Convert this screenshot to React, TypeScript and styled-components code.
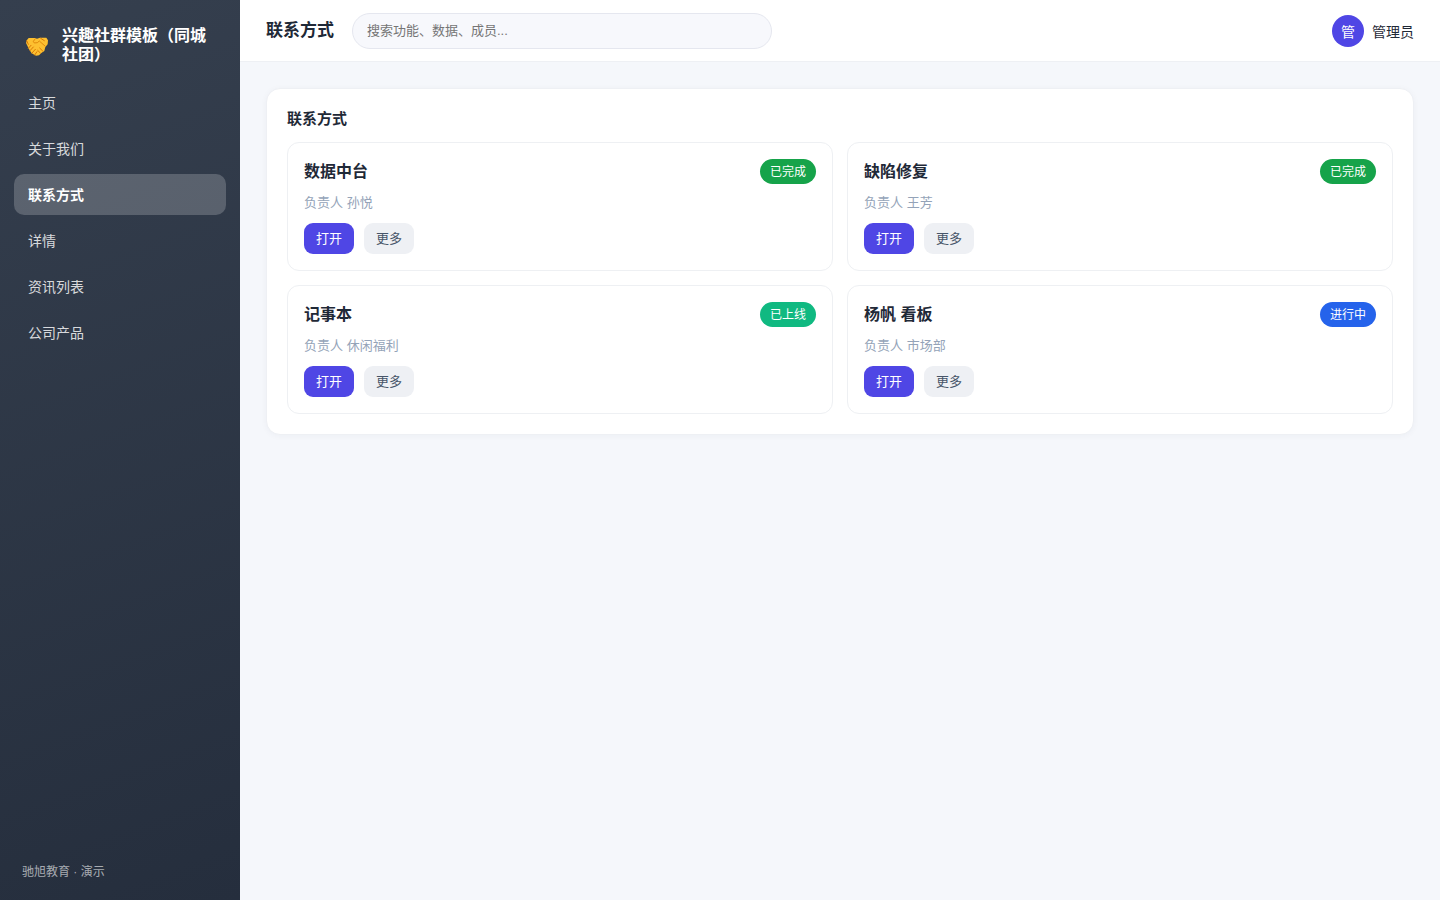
import React from "react";
import styled, { createGlobalStyle } from "styled-components";

const GlobalStyle = createGlobalStyle`
  *, *::before, *::after { box-sizing: border-box; }
  body {
    margin: 0;
    background: #f5f7fb;
    color: #1f2937;
    font-family: "Liberation Sans", "Noto Sans CJK SC", sans-serif;
    font-size: 14px;
  }
  button, input { font-family: inherit; }
`;

const Shell = styled.div`
  display: flex;
  min-height: 100vh;
`;

const Sidebar = styled.aside`
  display: flex;
  flex-direction: column;
  flex: 0 0 240px;
  padding: 20px 14px;
  background: linear-gradient(160deg, #353f4e, #252e3d);
  color: #fff;
`;

const Brand = styled.div`
  display: flex;
  align-items: center;
  gap: 14px;
  padding: 6px 12px 18px;
`;

const BrandIcon = styled.svg`
  flex: none;
  width: 22px;
  height: 24px;
`;

const BrandName = styled.div`
  font-size: 16px;
  font-weight: 700;
  line-height: 19px;
`;

const Nav = styled.nav`
  display: flex;
  flex-direction: column;
  gap: 5px;
`;

const NavLink = styled.a<{ $active: boolean }>`
  padding: 11px 14px 9px;
  border-radius: 10px;
  font-size: 14px;
  line-height: 21px;
  text-decoration: none;
  color: ${(p) => (p.$active ? "#fff" : "rgba(255, 255, 255, 0.82)")};
  font-weight: ${(p) => (p.$active ? 700 : 400)};
  background: ${(p) => (p.$active ? "rgba(255, 255, 255, 0.2)" : "transparent")};
`;

const SidebarFooter = styled.div`
  margin-top: auto;
  padding: 0 8px;
  font-size: 12px;
  line-height: 16px;
  color: rgba(255, 255, 255, 0.6);
`;

const Main = styled.div`
  display: flex;
  flex: 1;
  flex-direction: column;
  min-width: 0;
`;

const Topbar = styled.header`
  display: flex;
  align-items: center;
  gap: 18px;
  padding: 12px 26px;
  height: 62px;
  background: #fff;
  border-bottom: 1px solid #eef0f4;
`;

const PageTitle = styled.h1`
  margin: 0;
  font-size: 17px;
  line-height: 25px;
`;

const Search = styled.input`
  flex: 0 1 420px;
  min-width: 0;
  height: 36px;
  padding: 0 14px;
  border: 1px solid #e5e7ef;
  border-radius: 18px;
  background: #f7f8fc;
  font-size: 13px;
  color: #1f2937;
  &::placeholder { color: #757575; }
`;

const User = styled.div`
  display: flex;
  align-items: center;
  gap: 8px;
  margin-left: auto;
`;

const Avatar = styled.span`
  display: flex;
  align-items: center;
  justify-content: center;
  width: 32px;
  height: 32px;
  border-radius: 50%;
  background: #4f46e5;
  color: #fff;
`;

const Content = styled.main`
  padding: 26px;
`;

const Panel = styled.section`
  padding: 20px;
  border: 1px solid #eef0f4;
  border-radius: 14px;
  background: #fff;
  box-shadow: 0 1px 6px rgba(30, 41, 80, 0.04);
`;

const PanelTitle = styled.h2`
  margin: 0 0 14px;
  font-size: 15px;
  line-height: 19px;
`;

const Grid = styled.div`
  display: grid;
  grid-template-columns: repeat(2, minmax(0, 1fr));
  gap: 14px;
`;

const Card = styled.article`
  padding: 16px;
  border: 1px solid #eef0f3;
  border-radius: 12px;
`;

const CardHead = styled.div`
  display: flex;
  align-items: center;
  justify-content: space-between;
`;

const CardTitle = styled.h3`
  margin: 0;
  font-size: 16px;
  line-height: 25px;
`;

const Badge = styled.span<{ $color: string }>`
  padding: 4px 10px 2px;
  border-radius: 13px;
  background: ${(p) => p.$color};
  color: #fff;
  font-size: 12px;
  line-height: 19px;
`;

const Owner = styled.p`
  margin: 9px 0 11px;
  font-size: 13px;
  line-height: 19px;
  color: #94a3b8;
`;

const Actions = styled.div`
  display: flex;
  gap: 10px;
`;

const Button = styled.button<{ $primary?: boolean }>`
  padding: 6px 12px;
  border: 0;
  border-radius: 9px;
  font-size: 13px;
  line-height: 19px;
  cursor: pointer;
  background: ${(p) => (p.$primary ? "#4f46e5" : "#eef0f4")};
  color: ${(p) => (p.$primary ? "#fff" : "#475569")};
`;

function HandshakeIcon() {
  return (
    <BrandIcon viewBox="0 0 66 72" aria-hidden="true">
      <path
        d="M8 15 L26 15 L33 17 L42 14 L61 14 L66 22 L65 34 L58 42 L55 54 L46 60 L39 67 L30 68 L17 61 L9 49 L3 36 L0 30 L3 21 Z"
        fill="#fdc030"
      />
      <path
        d="M28 17 L22 25 L25 30 L34 29 L40 24 L58 40"
        fill="none"
        stroke="#e08a0c"
        strokeWidth="3"
        strokeLinejoin="round"
      />
      <path
        d="M44 16 L55 23 M2 23 L7 34 M7 46 L15 37 M12 53 L22 42 M18 60 L28 49 M26 66 L33 56 M35 52 L43 60 M41 45 L50 54"
        fill="none"
        stroke="#d97706"
        strokeWidth="3"
        strokeLinecap="round"
      />
    </BrandIcon>
  );
}

const navItems = ["主页", "关于我们", "联系方式", "详情", "资讯列表", "公司产品"];

const cards = [
  { title: "数据中台", owner: "孙悦", status: "已完成", color: "#16a34a" },
  { title: "缺陷修复", owner: "王芳", status: "已完成", color: "#16a34a" },
  { title: "记事本", owner: "休闲福利", status: "已上线", color: "#10b981" },
  { title: "杨帆 看板", owner: "市场部", status: "进行中", color: "#2563eb" },
];

export default function App() {
  return (
    <>
      <GlobalStyle />
      <Shell>
        <Sidebar>
          <Brand>
            <HandshakeIcon />
            <BrandName>兴趣社群模板（同城社团）</BrandName>
          </Brand>
          <Nav>
            {navItems.map((name) => (
              <NavLink key={name} href="#" $active={name === "联系方式"}>
                {name}
              </NavLink>
            ))}
          </Nav>
          <SidebarFooter>驰旭教育 · 演示</SidebarFooter>
        </Sidebar>
        <Main>
          <Topbar>
            <PageTitle>联系方式</PageTitle>
            <Search type="search" aria-label="搜索" placeholder="搜索功能、数据、成员..." />
            <User>
              <Avatar aria-hidden="true">管</Avatar>
              <span>管理员</span>
            </User>
          </Topbar>
          <Content>
            <Panel>
              <PanelTitle>联系方式</PanelTitle>
              <Grid>
                {cards.map((card) => (
                  <Card key={card.title}>
                    <CardHead>
                      <CardTitle>{card.title}</CardTitle>
                      <Badge $color={card.color}>{card.status}</Badge>
                    </CardHead>
                    <Owner>负责人 {card.owner}</Owner>
                    <Actions>
                      <Button type="button" $primary>打开</Button>
                      <Button type="button">更多</Button>
                    </Actions>
                  </Card>
                ))}
              </Grid>
            </Panel>
          </Content>
        </Main>
      </Shell>
    </>
  );
}
